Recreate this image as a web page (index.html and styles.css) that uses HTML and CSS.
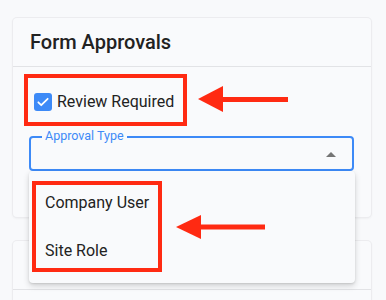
FILE: index.html
```html
<!DOCTYPE html>
<html lang="en">
<head>
    <meta charset="UTF-8">
    <meta name="viewport" content="width=device-width, initial-scale=1.0">
    <title>Form Approvals</title>
    <link rel="stylesheet" href="styles.css">
</head>
<body>

    <div class="card">
        <div class="card-header">
            <h2 class="card-title">Form Approvals</h2>
        </div>
        <div class="card-body">
            <!-- checkbox row, boxed in red -->
            <label class="highlight checkbox-row">
                <span class="checkbox">
                    <svg width="14" height="14" viewBox="0 0 24 24"><path d="M4 12.5l5 5L20 6.5" fill="none" stroke="#fff" stroke-width="3" stroke-linecap="round" stroke-linejoin="round"/></svg>
                </span>
                <span class="checkbox-label">Review Required</span>
            </label>

            <div class="select-field">
                <span class="select-label">Approval Type</span>
                <span class="select-caret"></span>
            </div>
        </div>

        <!-- open menu of the select -->
        <ul class="menu">
            <li class="menu-item">Company User</li>
            <li class="menu-item">Site Role</li>
            <div class="menu-highlight"></div>
        </ul>

        <svg class="arrow arrow-one" width="92" height="28" viewBox="0 0 92 28">
            <polygon points="0,13 25,0 25,26" fill="#ff2a12"/>
            <rect x="24" y="11" width="66" height="5" fill="#ff2a12"/>
        </svg>
        <svg class="arrow arrow-two" width="92" height="28" viewBox="0 0 92 28">
            <polygon points="0,12 25,0 25,24" fill="#ff2a12"/>
            <rect x="24" y="9.5" width="65" height="5" fill="#ff2a12"/>
        </svg>
    </div>

    <div class="card">
        <div class="card-header"></div>
        <div class="card-body empty"></div>
    </div>

</body>
</html>
```

FILE: styles.css
```css
body {
    font-family: Roboto, "Liberation Sans", Arial, sans-serif;
    background-color: #f8f9fb;
    color: #212121;
    margin: 0;
    padding: 18px 15px 0 13px;
    height: 282px;
    overflow: hidden;
}

.card {
    position: relative;
    width: 358px;
    background-color: #f9fafc;
    border-radius: 4px;
    box-shadow: 0 0 0 1px #ececef, 0 1px 3px rgba(0, 0, 0, 0.08);
}

.card + .card {
    margin-top: 24px;
}

.card-header {
    height: 48px;
    border-bottom: 1px solid #e2e3e6;
    display: flex;
    align-items: center;
    padding-left: 17px;
}

.card-title {
    margin: 0;
    font-size: 20px;
    font-weight: 500;
    color: #222;
}

.card-body {
    padding: 7px 17px 46px 11px;
}

.card-body.empty {
    height: 20px;
    padding: 0;
}

.highlight {
    border: 4px solid #ff2a12;
}

.checkbox-row {
    display: inline-flex;
    align-items: center;
    gap: 5px;
    padding: 14px 9px 11px 6px;
}

.checkbox {
    width: 18px;
    height: 18px;
    border-radius: 3px;
    background-color: #3d8af7;
    display: flex;
    align-items: center;
    justify-content: center;
}

.checkbox-label {
    font-size: 16px;
    color: #222;
}

.select-field {
    position: relative;
    margin: 10px 0 0 5px;
    height: 31px;
    border: 2px solid #3d8af7;
    border-radius: 4px;
}

.select-label {
    position: absolute;
    top: -9px;
    left: 11px;
    padding: 0 3px;
    background-color: #f9fafc;
    font-size: 12.5px;
    line-height: 14px;
    color: #3d8af7;
}

.select-caret {
    position: absolute;
    right: 16px;
    top: 14px;
    width: 0;
    height: 0;
    border-left: 5px solid transparent;
    border-right: 5px solid transparent;
    border-bottom: 5px solid #757575;
}

.menu {
    position: absolute;
    z-index: 2;
    left: 16px;
    top: 153px;
    width: 326px;
    margin: 0;
    padding: 8px 0;
    list-style: none;
    background-color: #f9fafc;
    border-radius: 4px;
    box-shadow: 0 3px 6px rgba(0, 0, 0, 0.16), 0 1px 2px rgba(0, 0, 0, 0.1);
}

.menu-item {
    height: 48px;
    line-height: 48px;
    padding-left: 16px;
    font-size: 16px;
    color: #222;
}

.menu-highlight {
    position: absolute;
    left: 3px;
    top: 10px;
    width: 122px;
    height: 83px;
    border: 4px solid #ff2a12;
}

.arrow {
    position: absolute;
    z-index: 3;
}

.arrow-one {
    left: 185px;
    top: 68px;
}

.arrow-two {
    left: 163px;
    top: 197px;
}
```
